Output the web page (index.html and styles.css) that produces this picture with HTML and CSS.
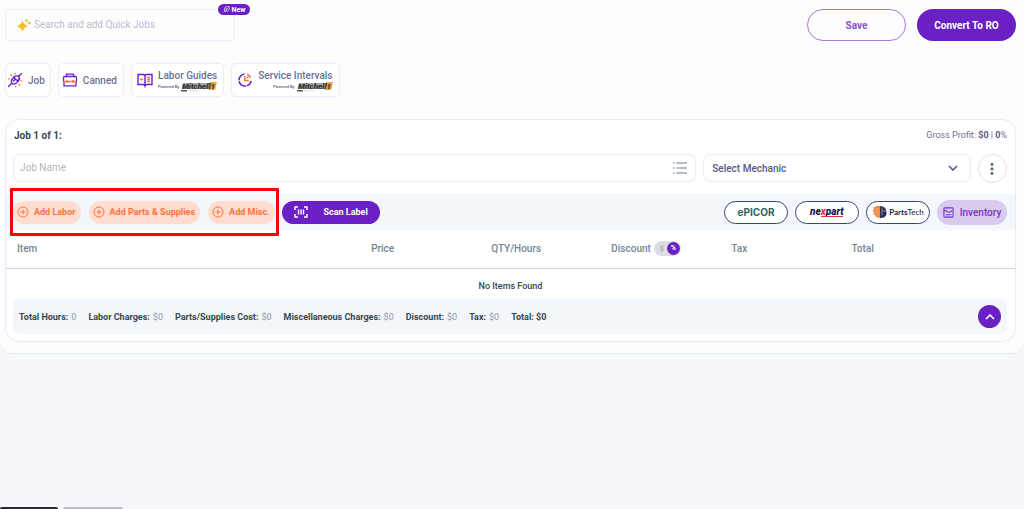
FILE: index.html
```html
<!DOCTYPE html>
<html lang="en">
<head>
<meta charset="utf-8">
<title>Job Estimate</title>
<link rel="stylesheet" href="styles.css">
</head>
<body>
<main class="panel">
  <header class="topbar">
    <label class="search">
      <svg class="spark" viewBox="0 0 14 14" fill="#f5bd1f"><path d="M5.5 2.500Q6.600 6.900 11 8.200Q6.600 9.500 5.500 14Q4.400 9.500 0 8.200Q4.400 6.900 5.500 2.500Z"/><path d="M9.500 .5Q9.800 2.200 11.500 2.500Q9.800 2.800 9.500 4.500Q9.200 2.800 7.500 2.500Q9.200 2.200 9.500 .5ZM12.200 3Q12.500 4.600 14 5Q12.500 5.400 12.200 7Q11.900 5.400 10.500 5Q11.900 4.600 12.200 3Z"/></svg>
      <input type="text" placeholder="Search and add Quick Jobs" aria-label="Search and add Quick Jobs">
      <span class="badge"><svg viewBox="0 0 8 8" fill="none" stroke="#fff" stroke-width=".8"><path d="M1 7l1-2.500V2L4 .8h3.200V4L5 6H2.500M2.500 5.500l3-3M3 3.500h2"/></svg>New</span>
    </label>
    <div class="topbar-actions">
      <button class="btn btn-outline">Save</button>
      <button class="btn btn-solid">Convert To RO</button>
    </div>
  </header>

  <nav class="tools">
    <button class="tool tool-job">
      <svg viewBox="0 0 16 16" fill="none" stroke="#6a20c4" stroke-width="1.400" stroke-linecap="round"><path d="M1.500 14.500l3-3M11.500 4.500l3-3M6.500 5l4.500 4.500M5 11.500c-1.500-2-.5-4 2-6.500M5 11.500c2 1.500 6-.5 6.500-4M7 5c2-1.500 4-1.500 5 0s.5 2.500-.5 4M6.500 9l2-2"/><path stroke="#ff7043" d="M4 3l.6.6M8 1.500v.5M1.800 7h.4M12 12.500l.6.6M14.300 9h.4M8.500 14.500v.3"/></svg>
      <span>Job</span>
    </button>
    <button class="tool tool-canned">
      <svg viewBox="0 0 16 16" fill="none" stroke="#6a20c4" stroke-width="1.300"><path d="M4.500 4.500V2.200h7v2.300M1.500 9V5.500q0-1 1-1h11q1 0 1 1V9M2 9v4.800h12V9"/><path stroke="#ff7043" d="M2 9.500h12M5 8v3M11 8v3"/></svg>
      <span>Canned</span>
    </button>
    <button class="tool">
      <svg viewBox="0 0 16 16" fill="none" stroke="#6a20c4" stroke-width="1.400"><path d="M8 3.500v10M8 3.500Q7.500 2.500 6 2.500H1v10h5q1.500 0 2 1.500 .5-1.500 2-1.500h5v-10h-5q-1.500 0-2 1"/><path stroke="#ff7043" d="M3 7.500h3M10 5.500h3M10 7.500h3M10 9.500h3"/></svg>
      <span class="stack"><span>Labor Guides</span><span class="powered">Powered By <svg class="mitchell" viewBox="0 0 36 10"><path fill="#a4a4a4" d="M2 1h33l-1 6H1z"/><path fill="#eca540" d="M29 0h7l-2 8h-6z"/><text x="1" y="7">Mitchell1</text><path fill="#555" d="M0 8h6v1.500H0z"/><path fill="#ccc" d="M7 8.500h10v.7H7z"/></svg></span></span>
    </button>
    <button class="tool">
      <svg viewBox="0 0 16 16" fill="none" stroke="#6a20c4" stroke-width="1.500"><path d="M7.500 2A6 6 0 1 0 14 8.800" stroke-dasharray="9 .8"/><path stroke="#ff7043" d="M7.800 4v4.500h4M10 2.300a6 6 0 0 1 3.500 3.500M9.800 6l1.500-1.300"/></svg>
      <span class="stack"><span>Service Intervals</span><span class="powered">Powered By <svg class="mitchell" viewBox="0 0 36 10"><path fill="#a4a4a4" d="M2 1h33l-1 6H1z"/><path fill="#eca540" d="M29 0h7l-2 8h-6z"/><text x="1" y="7">Mitchell1</text><path fill="#555" d="M0 8h6v1.500H0z"/><path fill="#ccc" d="M7 8.500h10v.7H7z"/></svg></span></span>
    </button>
  </nav>

  <section class="job">
    <div class="job-head">
      <h2>Job 1 of 1:</h2>
      <p>Gross Profit: <b>$0</b> | <b>0</b>%</p>
    </div>
    <div class="job-fields">
      <label class="field name-field">
        <input type="text" placeholder="Job Name" aria-label="Job Name">
        <svg class="list" viewBox="0 0 14 12" stroke="#607d8b" stroke-width="1.200"><path d="M3.500 1H14M3.500 6H14M3.500 11H14M0 1h1.500M0 6h1.500M0 11h1.500"/></svg>
      </label>
      <div class="field mechanic">
        <select aria-label="Select Mechanic"><option>Select Mechanic</option></select>
        <svg class="chevron" viewBox="0 0 10 6" fill="none" stroke="#57577f" stroke-width="1.600"><path d="M1 1l4 4 4-4"/></svg>
      </div>
      <button class="more" aria-label="More options"><svg viewBox="0 0 4 12" fill="#4c6473"><circle cx="2" cy="1.500" r="1.400"/><circle cx="2" cy="6" r="1.400"/><circle cx="2" cy="10.500" r="1.400"/></svg></button>
    </div>

    <div class="actions">
      <div class="adds">
        <button class="add"><svg viewBox="0 0 12 12"><circle cx="6" cy="6" r="5"/><path d="M6 3.500v5M3.500 6h5"/></svg>Add Labor</button>
        <button class="add"><svg viewBox="0 0 12 12"><circle cx="6" cy="6" r="5"/><path d="M6 3.500v5M3.500 6h5"/></svg>Add Parts &amp; Supplies</button>
        <button class="add"><svg viewBox="0 0 12 12"><circle cx="6" cy="6" r="5"/><path d="M6 3.500v5M3.500 6h5"/></svg>Add Misc.</button>
        <span class="highlight"></span>
      </div>
      <button class="scan"><svg viewBox="0 0 14 12" fill="none" stroke="#fff" stroke-width="1.400"><path d="M4 1H1v3M10 1h3v3M4 11H1V8M10 11h3V8M4.500 3.500v5M7 3.500v5M9.500 3.500v5"/></svg>Scan Label</button>
      <div class="vendors">
        <button class="vendor epicor" aria-label="Epicor">ePICOR</button>
        <button class="vendor" aria-label="Nexpart"><svg class="nexpart" viewBox="0 0 36 12"><text x="1" y="9">ne<tspan fill="#e8392b">x</tspan>part</text><path d="M12 10.500h22" stroke="#d93636" stroke-width="1"/></svg></button>
        <button class="vendor partstech" aria-label="PartsTech"><svg viewBox="0 0 16 14"><path fill="#f0873b" d="M8 1Q4 0 3.500 2L1 2.500l1 1.500-1.500 2L2 7l-.5 2.500 2 .5L4 12l4 1z"/><path fill="#233158" d="M8 1q6 0 6.500 6T8 13z"/><path d="M4 4h3M3 7h4M5 9.500h2" stroke="#fbd9bf" stroke-width=".5"/><path d="M10 2.500v8M10 6h4" stroke="#d9a37e" stroke-width=".7" fill="none"/></svg><span><b>Parts</b>Tech</span></button>
        <button class="inventory"><svg viewBox="0 0 12 12" fill="none" stroke="#7335c5" stroke-width="1.200"><rect x="1" y="1" width="10" height="10" rx="1"/><path d="M1 4h2.500L5 5.500h2.500L10 4M3 8.500h6"/></svg>Inventory</button>
      </div>
    </div>

    <table class="items">
      <thead>
        <tr>
          <th class="col-item">Item</th><th class="col-value">Price</th><th class="col-value">QTY/Hours</th>
          <th class="col-value"><span class="discount">Discount <button class="switch" aria-label="Discount type"><span>$</span><b>%</b></button></span></th>
          <th class="col-value">Tax</th><th class="col-value">Total</th><th></th>
        </tr>
      </thead>
      <tbody><tr><td colspan="7">No Items Found</td></tr></tbody>
    </table>

    <footer class="totals">
      <span><b>Total Hours:</b> 0</span>
      <span><b>Labor Charges:</b> $0</span>
      <span><b>Parts/Supplies Cost:</b> $0</span>
      <span><b>Miscellaneous Charges:</b> $0</span>
      <span><b>Discount:</b> $0</span>
      <span><b>Tax:</b> $0</span>
      <span><b>Total: $0</b></span>
      <button class="collapse" aria-label="Collapse"><svg viewBox="0 0 10 6" fill="none" stroke="#fff" stroke-width="1.600"><path d="M1 5l4-4 4 4"/></svg></button>
    </footer>
  </section>
</main>
<div class="dock"><span class="dock-dark"></span><span class="dock-light"></span></div>
</body>
</html>
```
FILE: styles.css
```css
* { box-sizing: border-box; }
body {
  margin: 0;
  min-height: 100vh;
  display: flex;
  flex-direction: column;
  background: #f6f7fc;
  color: #37474f;
  font-family: Roboto, "Liberation Sans", sans-serif;
  font-size: 9px;
}
button, input, select { font: inherit; color: inherit; }
button {
  display: inline-flex;
  align-items: center;
  justify-content: center;
  padding: 0;
  border: 0;
  background: none;
  white-space: nowrap;
}
svg { flex: none; }
h2, p { margin: 0; }
.panel {
  padding: 9px 8px 11px 5px;
  background: #fdfdfd;
  border-bottom: 1px solid #e6e9f8;
  border-radius: 0 0 12px 12px;
}
.topbar { display: flex; justify-content: space-between; }
.search {
  position: relative;
  display: flex;
  align-items: center;
  gap: 3px;
  width: 230px;
  height: 32px;
  padding: 0 11px;
  border: 1px solid #e8eefc;
  border-radius: 4px;
}
.spark { width: 14px; height: 14px; }
.search input {
  flex: 1;
  min-width: 0;
  padding: 0 0 2px;
  border: 0;
  outline: 0;
  background: none;
  font-size: 10px;
}
.search input::placeholder { color: #bcbccd; }
.badge {
  position: absolute;
  top: -6px;
  right: -16px;
  display: flex;
  align-items: center;
  justify-content: center;
  gap: 2px;
  width: 32px;
  height: 11px;
  border-radius: 6px;
  background: #6a20c4;
  color: #fff;
  font-size: 7px;
  font-weight: 700;
}
.badge svg { width: 7px; height: 7px; }
.topbar-actions { display: flex; gap: 11px; }
.btn {
  width: 99px;
  height: 32px;
  border-radius: 16px;
  font-size: 10px;
  font-weight: 700;
}
.btn-outline { border: 1px solid #a77add; color: #8a50d3; }
.btn-solid { background: #6a20c4; color: #fff; }
.tools { display: flex; gap: 7px; margin-top: 22px; }
.tool {
  gap: 5px;
  height: 34px;
  padding: 0 6px 0 5px;
  border: 1px solid #e8eefc;
  border-radius: 5px;
  background: #fff;
  color: #6f7094;
  font-size: 10px;
  font-weight: 500;
}
.tool-job { padding: 0 5px 0 1px; }
.tool-canned { padding: 0 6px 0 3px; }
.tool > svg { width: 16px; height: 16px; }
.stack { display: flex; flex-direction: column; align-items: flex-end; line-height: 13px; }
.powered {
  display: flex;
  align-items: center;
  gap: 2px;
  font-size: 4px;
  font-weight: 700;
  line-height: 10px;
}
.mitchell { width: 36px; height: 10px; }
.mitchell text { font-size: 8px; font-weight: 900; font-style: italic; fill: #303030; }
.job {
  margin-top: 22px;
  padding-bottom: 7px;
  border: 1px solid #e3ecfa;
  border-radius: 14px;
  background: #fff;
}
.job-head {
  display: flex;
  align-items: center;
  justify-content: space-between;
  height: 34px;
  padding: 0 8px 4px;
  color: #6f7094;
}
.job-head h2 { color: #37474f; font-size: 10px; font-weight: 700; }
.job-head b { color: #57577f; font-weight: 700; }
.job-fields {
  display: grid;
  grid-template-columns: 684fr 268fr auto;
  align-items: start;
  gap: 7px;
  padding: 0 8px 0 7px;
  font-size: 10px;
}
.field {
  display: flex;
  align-items: center;
  height: 28px;
  border: 1px solid #ebebed;
  border-radius: 7px;
}
.name-field { padding: 0 8px 0 6px; }
.name-field input {
  flex: 1;
  padding: 0 0 2px;
  border: 0;
  outline: 0;
  background: none;
}
.name-field input::placeholder { color: #b1b8b8; }
.list { width: 14px; height: 12px; }
.mechanic { padding: 0 12px 0 8px; color: #57577f; }
.mechanic select {
  flex: 1;
  appearance: none;
  padding: 0;
  border: 0;
  background: none;
  font-weight: 500;
}
.chevron { width: 10px; height: 6px; }
.more {
  width: 29px;
  height: 29px;
  border: 1px solid #e2e2e4;
  border-radius: 50%;
}
.more svg { width: 4px; height: 12px; }
.actions {
  display: flex;
  align-items: center;
  height: 36px;
  margin-top: 11px;
  padding: 0 8px 0 7px;
  background: #f3f6fb;
}
.adds { position: relative; display: flex; gap: 8px; }
.add {
  gap: 5px;
  height: 23px;
  padding: 0 5px 0 4px;
  border-radius: 12px;
  background: #ffddd0;
  color: #ff7438;
  font-weight: 700;
}
.add svg { width: 12px; height: 12px; fill: none; stroke: #ff7438; stroke-width: 1; }
.highlight {
  position: absolute;
  inset: -13px -4px -12px -3px;
  border: 3px solid #fb0007;
  border-radius: 1px;
}
.scan {
  gap: 16px;
  width: 98px;
  height: 23px;
  margin-left: 7px;
  border-radius: 12px;
  background: #6a20c4;
  color: #fff;
  font-weight: 700;
}
.scan svg { width: 14px; height: 12px; }
.vendors { display: flex; align-items: center; gap: 7px; margin-left: auto; }
.vendor {
  width: 64px;
  height: 23px;
  border: 1px solid #3b4571;
  border-radius: 12px;
  background: #fff;
}
.epicor { color: #2c6468; font: 700 10px Inter, sans-serif; }
.nexpart { width: 36px; height: 12px; }
.nexpart text { font: italic 900 10px Roboto, sans-serif; fill: #17224f; }
.partstech { gap: 1px; color: #17224f; font-family: Lato, sans-serif; font-size: 8px; }
.partstech svg { width: 16px; height: 14px; }
.inventory {
  gap: 6px;
  width: 70px;
  height: 25px;
  border-radius: 13px;
  background: #d9cbf0;
  color: #7335c5;
  font-size: 10px;
  font-weight: 500;
}
.inventory svg { width: 11px; height: 11px; }
.items { width: 100%; border-collapse: collapse; table-layout: fixed; }
.items th {
  height: 38px;
  padding: 0 12px;
  border-bottom: 1px solid #cfd8dc;
  color: #748692;
  font-size: 10px;
  font-weight: 500;
  text-align: left;
  white-space: nowrap;
}
.items .col-item { width: 35%; padding-left: 11px; }
.items .col-value { width: 11.9%; }
.items td { height: 31px; padding: 4px 0 0; text-align: center; font-weight: 500; }
.discount { display: flex; align-items: center; gap: 3px; }
.switch {
  justify-content: space-between;
  width: 27px;
  height: 15px;
  padding: 0 1px 0 6px;
  border-radius: 8px;
  background: #dddde5;
  color: #999;
  font-size: 7px;
}
.switch b {
  width: 13px;
  height: 13px;
  border-radius: 50%;
  background: #6a20c4;
  color: #fff;
  line-height: 13px;
}
.totals {
  display: flex;
  align-items: center;
  gap: 12px;
  height: 35px;
  margin: 0 8px 0 7px;
  padding: 0 6px;
  border-radius: 7px;
  background: #f3f6fb;
  color: #8d99a5;
  white-space: nowrap;
}
.totals span { display: flex; gap: 3px; }
.totals b { color: #37474f; font-weight: 700; }
.collapse {
  width: 23px;
  height: 23px;
  margin-left: auto;
  border-radius: 50%;
  background: #6a20c4;
}
.collapse svg { width: 10px; height: 6px; }
.dock { display: flex; gap: 5px; margin-top: auto; }
.dock span { height: 2px; border-radius: 3px 3px 0 0; }
.dock-dark { width: 58px; background: #2b2b2b; }
.dock-light { width: 60px; background: #bfbfbf; }
```
